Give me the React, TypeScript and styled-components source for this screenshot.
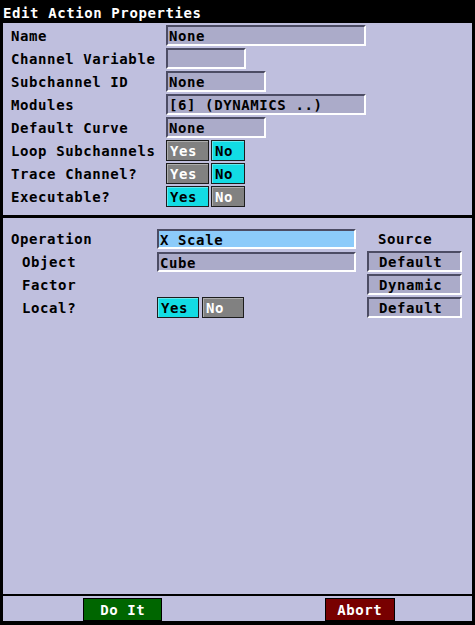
import React from "react";
import styled, { createGlobalStyle } from "styled-components";

const GlobalStyle = createGlobalStyle`
  html, body { margin: 0; padding: 0; background: #000; }
  body { font-family: "DejaVu Sans Mono", "Liberation Mono", monospace; }
`;

const Window = styled.div`
  width: 475px;
  height: 625px;
  background: #000;
  display: flex;
  flex-direction: column;
  box-sizing: border-box;
  padding: 0 3px 4px 3px;
  font-family: "DejaVu Sans Mono", "Liberation Mono", monospace;
  font-weight: bold;
  font-size: 14px;
  letter-spacing: 0.6px;
`;

const TitleBar = styled.div`
  height: 23px;
  display: flex;
  align-items: center;
  color: #fff;
  box-sizing: border-box;
  padding-top: 3px;
`;

const Panel = styled.div`
  background: #bfbfde;
`;

const UpperSection = styled(Panel)`
  height: 192px;
  box-sizing: border-box;
  padding: 2px 0 0 8px;
  display: grid;
  grid-template-columns: 155px 1fr;
  grid-auto-rows: 21px;
  row-gap: 2px;
  align-items: center;
`;

const Divider = styled.div<{ $h: number }>`
  height: ${(p) => p.$h}px;
  background: #000;
`;

const LowerSection = styled(Panel)`
  flex: 1;
  box-sizing: border-box;
  padding: 10px 0 0 8px;
  display: grid;
  grid-template-columns: 146px 199px 95px;
  grid-template-rows: 21px 21px 21px 21px;
  row-gap: 2px;
  align-content: start;
  align-items: center;
`;

const BottomBar = styled(Panel)`
  height: 25px;
  display: grid;
  grid-template-columns: 1fr 1fr;
  align-items: end;
`;

const Label = styled.div<{ $indent?: boolean }>`
  color: #000;
  padding-left: ${(p) => (p.$indent ? 11 : 0)}px;
  white-space: nowrap;
  line-height: 21px;
  padding-top: 1px;
`;

const Field = styled.div<{ $w: number; $tone?: "blue" | "plain"; $h?: number }>`
  width: ${(p) => p.$w}px;
  height: ${(p) => p.$h ?? 21}px;
  box-sizing: border-box;
  border-style: solid;
  border-width: 2px;
  border-color: #4c4c64 #fff #fff #4c4c64;
  background: ${(p) => (p.$tone === "blue" ? "#8ccbfa" : "#ababc9")};
  color: #000;
  padding-left: 1px;
  line-height: 18px;
  white-space: nowrap;
  overflow: hidden;
`;

const SourceBox = styled(Field)`
  padding-left: 10px;
  margin-left: 11px;
`;

const SourceLabel = styled.div`
  padding-left: 22px;
  color: #000;
  line-height: 21px;
  padding-top: 1px;
`;

const ToggleGroup = styled.div<{ $gap: number }>`
  display: flex;
  gap: ${(p) => p.$gap}px;
`;

const Toggle = styled.div<{ $on: boolean; $w: number }>`
  width: ${(p) => p.$w}px;
  height: 21px;
  box-sizing: border-box;
  border: 1px solid #1c1c1c;
  box-shadow: inset 1px 1px 0 rgba(255, 255, 255, 0.35);
  padding-left: 3px;
  line-height: 21px;
  color: ${(p) => (p.$on ? "#000" : "#fff")};
  background: ${(p) => (p.$on ? "#12dce4" : "#818181")};
`;

const ActionButton = styled.div<{ $tone: "green" | "red"; $w: number; $shift: number }>`
  width: ${(p) => p.$w}px;
  height: 23px;
  box-sizing: border-box;
  border: 1px solid #000;
  color: #fff;
  text-align: center;
  line-height: 22px;
  justify-self: center;
  margin-left: ${(p) => p.$shift}px;
  background: ${(p) => (p.$tone === "green" ? "#006600" : "#780000")};
`;

const YesNo = ({ yes, widths, gap }: { yes: boolean; widths: [number, number]; gap: number }) => (
  <ToggleGroup $gap={gap}>
    <Toggle $on={yes} $w={widths[0]}>Yes</Toggle>
    <Toggle $on={!yes} $w={widths[1]}>No</Toggle>
  </ToggleGroup>
);

const Empty = styled.div``;

export default function App() {
  return (
    <>
      <GlobalStyle />
      <Window>
        <TitleBar>Edit Action Properties</TitleBar>
        <UpperSection>
          <Label>Name</Label>
          <Field $w={200}>None</Field>
          <Label>Channel Variable</Label>
          <Field $w={80} />
          <Label>Subchannel ID</Label>
          <Field $w={100}>None</Field>
          <Label>Modules</Label>
          <Field $w={200}>[6] (DYNAMICS ..)</Field>
          <Label>Default Curve</Label>
          <Field $w={100}>None</Field>
          <Label>Loop Subchannels</Label>
          <YesNo yes={false} widths={[43, 34]} gap={2} />
          <Label>Trace Channel?</Label>
          <YesNo yes={false} widths={[43, 34]} gap={2} />
          <Label>Executable?</Label>
          <YesNo yes={true} widths={[43, 34]} gap={2} />
        </UpperSection>
        <Divider $h={3} />
        <LowerSection>
          <Label>Operation</Label>
          <Field $w={199} $h={20} $tone="blue">X Scale</Field>
          <SourceLabel>Source</SourceLabel>
          <Label $indent>Object</Label>
          <Field $w={199} $h={20}>Cube</Field>
          <SourceBox $w={95}>Default</SourceBox>
          <Label $indent>Factor</Label>
          <Empty />
          <SourceBox $w={95}>Dynamic</SourceBox>
          <Label $indent>Local?</Label>
          <YesNo yes={true} widths={[42, 42]} gap={3} />
          <SourceBox $w={95}>Default</SourceBox>
        </LowerSection>
        <Divider $h={2} />
        <BottomBar>
          <ActionButton $tone="green" $w={79} $shift={5}>Do It</ActionButton>
          <ActionButton $tone="red" $w={70} $shift={10}>Abort</ActionButton>
        </BottomBar>
      </Window>
    </>
  );
}
